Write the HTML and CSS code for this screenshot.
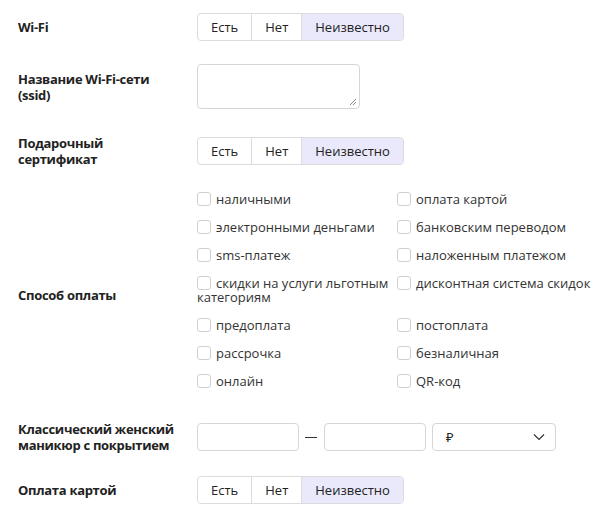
FILE: index.html
```html
<!DOCTYPE html>
<html lang="ru">
<head>
<meta charset="utf-8">
<link rel="stylesheet" href="styles.css">
</head>
<body>
<div class="form">
  <div class="row r1">
    <div class="label">Wi-Fi</div>
    <div class="control">
      <div class="seg"><span>Есть</span><span>Нет</span><span class="on">Неизвестно</span></div>
    </div>
  </div>
  <div class="row r2">
    <div class="label">Название Wi-Fi-сети (ssid)</div>
    <div class="control">
      <div class="textarea"><svg class="grip" width="8" height="8" viewBox="0 0 8 8"><path d="M7 1 L1 7 M7 4 L4 7" stroke="#888" stroke-width="1"/></svg></div>
    </div>
  </div>
  <div class="row r3">
    <div class="label">Подарочный сертификат</div>
    <div class="control">
      <div class="seg"><span>Есть</span><span>Нет</span><span class="on">Неизвестно</span></div>
    </div>
  </div>
  <div class="row r4">
    <div class="label label-low">Способ оплаты</div>
    <div class="control">
      <div class="checks">
        <div class="check"><i></i>наличными</div>
        <div class="check"><i></i>оплата картой</div>
        <div class="check"><i></i>электронными деньгами</div>
        <div class="check"><i></i>банковским переводом</div>
        <div class="check"><i></i>sms-платеж</div>
        <div class="check"><i></i>наложенным платежом</div>
        <div class="check"><i></i>скидки на услуги льготным категориям</div>
        <div class="check"><i></i>дисконтная система скидок</div>
        <div class="check"><i></i>предоплата</div>
        <div class="check"><i></i>постоплата</div>
        <div class="check"><i></i>рассрочка</div>
        <div class="check"><i></i>безналичная</div>
        <div class="check"><i></i>онлайн</div>
        <div class="check"><i></i>QR-код</div>
      </div>
    </div>
  </div>
  <div class="row r5">
    <div class="label">Классический женский маникюр с покрытием</div>
    <div class="control price">
      <div class="input"></div>
      <div class="dash"></div>
      <div class="input"></div>
      <div class="select"><span>₽</span><svg width="12" height="8" viewBox="0 0 12 8"><path d="M1 1.5 L6 6.5 L11 1.5" fill="none" stroke="#333" stroke-width="1.2"/></svg></div>
    </div>
  </div>
  <div class="row r6">
    <div class="label">Оплата картой</div>
    <div class="control">
      <div class="seg"><span>Есть</span><span>Нет</span><span class="on">Неизвестно</span></div>
    </div>
  </div>
</div>
</body>
</html>
```
FILE: styles.css
```css
* { box-sizing: border-box; }
body {
  margin: 0;
  background: #fff;
  font-family: "Open Sans", "Noto Sans", sans-serif;
  font-size: 13px;
  color: #222;
}
.form {
  padding: 13px 0 0 18px;
  display: flex;
  flex-direction: column;
}
.row {
  display: flex;
  align-items: center;
}
.label {
  width: 179px;
  flex: none;
  padding-right: 21px;
  font-weight: 700;
  line-height: 16px;
  letter-spacing: -0.3px;
  color: #222;
}
.label-low { padding-top: 10px; }
.r2 { margin-top: 23px; }
.r3 { margin-top: 26px; }
.r4 { margin-top: 25px; }
.r5 { margin-top: 33px; }
.r6 { margin-top: 23px; }

.seg {
  display: flex;
  height: 28px;
  border: 1px solid #dcdcdc;
  border-radius: 4px;
  overflow: hidden;
}
.seg span {
  display: flex;
  align-items: center;
  padding: 0 13px;
  border-left: 1px solid #dcdcdc;
  color: #222;
}
.seg span:first-child { border-left: 0; }
.seg span.on { background: #e9e9fb; }

.textarea {
  position: relative;
  width: 163px;
  height: 45px;
  border: 1px solid #d6d6d6;
  border-radius: 4px;
}
.grip { position: absolute; right: 2px; bottom: 2px; }

.checks {
  display: grid;
  grid-template-columns: 200px 200px;
  row-gap: 14px;
}
.check {
  line-height: 14px;
  color: #333;
}
.check i {
  display: inline-block;
  width: 14px;
  height: 14px;
  border: 1px solid #d0d0d0;
  border-radius: 3px;
  vertical-align: top;
  margin-right: 5px;
}

.price { display: flex; align-items: center; }
.input {
  width: 102px;
  height: 28px;
  border: 1px solid #d6d6d6;
  border-radius: 4px;
}
.dash {
  width: 12px;
  height: 1px;
  background: #333;
  margin: 0 7px 0 6px;
}
.select {
  margin-left: 6px;
  width: 124px;
  height: 28px;
  border: 1px solid #d6d6d6;
  border-radius: 4px;
  display: flex;
  align-items: center;
  justify-content: space-between;
  padding: 0 10px 0 13px;
  color: #222;
}
```
